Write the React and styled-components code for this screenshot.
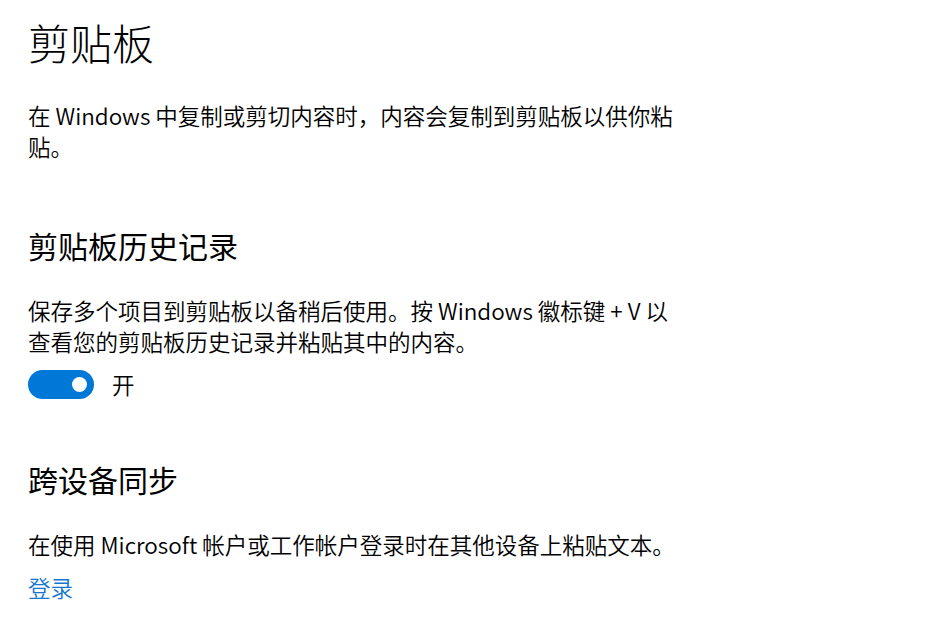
import React from "react";
import styled, { createGlobalStyle } from "styled-components";

const Global = createGlobalStyle`
  html, body { margin: 0; padding: 0; background: #ffffff; }
  body {
    font-family: "Noto Sans CJK SC", "Noto Sans", sans-serif;
    color: #000000;
    -webkit-font-smoothing: antialiased;
  }
`;

const Page = styled.main`
  width: 935px;
  height: 638px;
  box-sizing: border-box;
  padding: 14px 0 0 28px;
  display: flex;
  flex-direction: column;
  overflow: hidden;
`;

const Title = styled.h1`
  margin: 0;
  font-size: 42px;
  line-height: 56px;
  font-weight: 300;
`;

const SectionTitle = styled.h2`
  margin: ${(p) => p.$top}px 0 0;
  font-size: 30px;
  line-height: 40px;
  font-weight: 400;
`;

const Text = styled.p`
  margin: ${(p) => p.$top}px 0 0;
  max-width: 720px;
  font-size: 22.5px;
  line-height: 31px;
  font-weight: 350;
`;

const ToggleRow = styled.div`
  margin-top: 12px;
  display: flex;
  align-items: center;
  gap: 18px;
  height: 30px;
`;

const Track = styled.button`
  position: relative;
  width: 66px;
  height: 29px;
  padding: 0;
  border: none;
  border-radius: 15px;
  background: ${(p) => (p.$on ? "#0078d7" : "#ffffff")};
  cursor: pointer;
`;

const Knob = styled.span`
  position: absolute;
  top: 50%;
  right: 7px;
  width: 15px;
  height: 15px;
  margin-top: -7.5px;
  border-radius: 50%;
  background: #ffffff;
`;

const ToggleLabel = styled.span`
  font-size: 22.5px;
  line-height: 30px;
  font-weight: 350;
`;

const Link = styled.a`
  margin-top: 11px;
  font-size: 22.5px;
  line-height: 32px;
  font-weight: 350;
  color: #1676cf;
  text-decoration: none;
  align-self: flex-start;
  cursor: pointer;
`;

export default function App() {
  return (
    <>
      <Global />
      <Page>
        <Title>剪贴板</Title>
        <Text $top={30}>
          在 Windows 中复制或剪切内容时，内容会复制到剪贴板以供你粘
          <br />
          贴。
        </Text>

        <SectionTitle $top={63}>剪贴板历史记录</SectionTitle>
        <Text $top={30}>
          保存多个项目到剪贴板以备稍后使用。按 Windows 徽标键 + V 以
          <br />
          查看您的剪贴板历史记录并粘贴其中的内容。
        </Text>
        <ToggleRow>
          <Track $on aria-label="剪贴板历史记录">
            <Knob />
          </Track>
          <ToggleLabel>开</ToggleLabel>
        </ToggleRow>

        <SectionTitle $top={60}>跨设备同步</SectionTitle>
        <Text $top={30}>
          在使用 Microsoft 帐户或工作帐户登录时在其他设备上粘贴文本。
        </Text>
        <Link>登录</Link>
      </Page>
    </>
  );
}
